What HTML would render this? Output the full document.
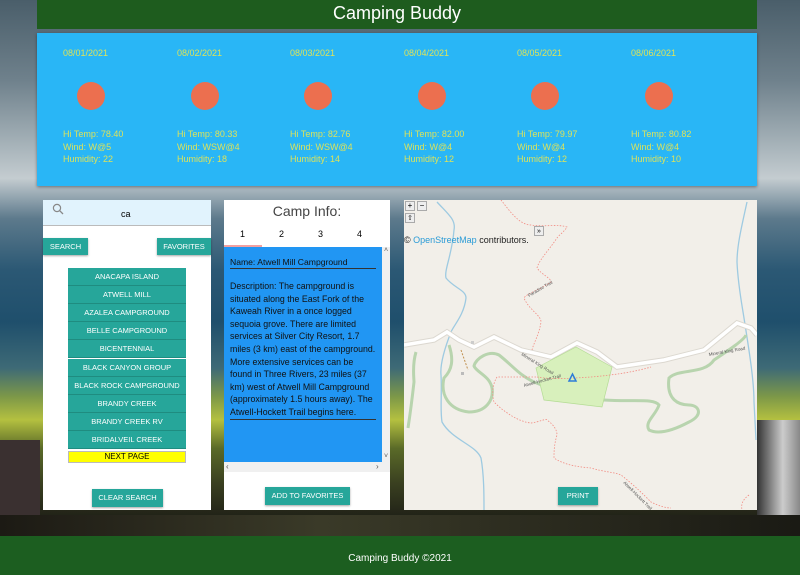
<!DOCTYPE html>
<html><head><meta charset="utf-8"><style>
*{margin:0;padding:0;box-sizing:border-box}
html,body{width:800px;height:575px;overflow:hidden}
body{position:relative;font-family:"Liberation Sans",sans-serif;
background:linear-gradient(180deg,#4a5e6a 0%,#6f818c 14%,#aab6bc 26%,#c4ccd0 31%,#5d7a8c 38%,#2b5874 47%,#1f4f6c 56%,#3e6a76 64%,#7d9848 69%,#b4c040 73%,#5a6a28 78%,#3a4020 84%,#1c1c16 91%,#2a281e 100%);}
.abs{position:absolute}
.hdr{left:37px;top:0;width:720px;height:29px;background:#1e5c1e;color:#fff;font-size:18px;text-align:center;line-height:26px}
.wx{left:37px;top:33px;width:720px;height:153px;background:#29b6f6;box-shadow:0 1px 3px rgba(0,0,0,.4)}
.col{position:absolute;top:0;color:#dde35a;font-size:9px}
.col .d{position:absolute;top:15px;left:0;white-space:nowrap}
.col .c{position:absolute;top:49px;left:14px;width:28px;height:28px;border-radius:50%;background:#ec6f4f}
.col .t{position:absolute;top:95px;left:0;white-space:nowrap;line-height:12.7px}
.panel{background:#fff;top:200px;height:310px}
.btn{position:absolute;background:#26a69a;color:#fff;font-size:7.5px;text-align:center;box-shadow:0 1px 2px rgba(0,0,0,.35)}
.li{position:absolute;left:25px;width:118px;height:18px;background:#26a69a;color:#fff;font-size:7.5px;text-align:center;line-height:18px;border-bottom:1px solid #1f8c80}
.foot{left:0;top:536px;width:800px;height:39px;background:#1c5e20;color:#fff;font-size:10px;text-align:center;line-height:46px}
</style></head><body>
<div class="abs" style="left:0;top:440px;width:40px;height:100px;background:#3a3030"></div>
<div class="abs" style="left:757px;top:420px;width:43px;height:110px;background:linear-gradient(90deg,#333,#ccc 60%,#888)"></div>
<div class="abs" style="left:0;top:515px;width:800px;height:22px;background:linear-gradient(90deg,#1c1a14,#3a3a28 40%,#1a1a14)"></div>
<div class="abs hdr">Camping Buddy</div>
<div class="abs wx">
 <div class="col" style="left:26px"><div class="d">08/01/2021</div><div class="c"></div><div class="t">Hi Temp: 78.40<br>Wind: W@5<br>Humidity: 22</div></div>
 <div class="col" style="left:140px"><div class="d">08/02/2021</div><div class="c"></div><div class="t">Hi Temp: 80.33<br>Wind: WSW@4<br>Humidity: 18</div></div>
 <div class="col" style="left:253px"><div class="d">08/03/2021</div><div class="c"></div><div class="t">Hi Temp: 82.76<br>Wind: WSW@4<br>Humidity: 14</div></div>
 <div class="col" style="left:367px"><div class="d">08/04/2021</div><div class="c"></div><div class="t">Hi Temp: 82.00<br>Wind: W@4<br>Humidity: 12</div></div>
 <div class="col" style="left:480px"><div class="d">08/05/2021</div><div class="c"></div><div class="t">Hi Temp: 79.97<br>Wind: W@4<br>Humidity: 12</div></div>
 <div class="col" style="left:594px"><div class="d">08/06/2021</div><div class="c"></div><div class="t">Hi Temp: 80.82<br>Wind: W@4<br>Humidity: 10</div></div>
</div>

<div class="abs panel" style="left:43px;width:168px">
 <div class="abs" style="left:0;top:0;width:168px;height:26px;background:#e1f3fd;border-bottom:1px solid #bbb"></div>
 <svg class="abs" style="left:9px;top:3px" width="12" height="12"><circle cx="5" cy="5" r="3.6" fill="none" stroke="#888" stroke-width="1.2"/><line x1="7.6" y1="7.6" x2="11" y2="11" stroke="#888" stroke-width="1.3"/></svg>
 <div class="abs" style="left:78px;top:9px;font-size:9px;color:#000">ca</div>
 <div class="btn" style="left:0;top:38px;width:45px;height:17px;line-height:17px">SEARCH</div>
 <div class="btn" style="left:114px;top:38px;width:54px;height:17px;line-height:17px">FAVORITES</div>
 <div class="li" style="top:68px">ANACAPA ISLAND</div>
 <div class="li" style="top:86px">ATWELL MILL</div>
 <div class="li" style="top:104px">AZALEA CAMPGROUND</div>
 <div class="li" style="top:122px">BELLE CAMPGROUND</div>
 <div class="li" style="top:140px">BICENTENNIAL</div>
 <div class="li" style="top:159px">BLACK CANYON GROUP</div>
 <div class="li" style="top:177px">BLACK ROCK CAMPGROUND</div>
 <div class="li" style="top:195px">BRANDY CREEK</div>
 <div class="li" style="top:213px">BRANDY CREEK RV</div>
 <div class="li" style="top:231px">BRIDALVEIL CREEK</div>
 <div class="abs" style="left:25px;top:251px;width:118px;height:12px;background:#ffff00;border:1px solid #bbb;font-size:8px;text-align:center;line-height:10px">NEXT PAGE</div>
 <div class="btn" style="left:49px;top:289px;width:71px;height:18px;line-height:18px">CLEAR SEARCH</div>
</div>

<div class="abs panel" style="left:224px;width:166px">
 <div class="abs" style="left:0;top:3px;width:166px;text-align:center;font-size:14px;color:#444">Camp Info:</div>
 <div class="abs" style="left:0;top:29px;width:166px;font-size:9px;color:#000">
  <span class="abs" style="left:16px">1</span><span class="abs" style="left:55px">2</span><span class="abs" style="left:94px">3</span><span class="abs" style="left:133px">4</span></div>
 <div class="abs" style="left:0;top:45px;width:38px;height:2px;background:#f3a0a0"></div>
 <div class="abs" style="left:0;top:47px;width:158px;height:215px;background:#2196f3"></div>
 <div class="abs" style="left:158px;top:47px;width:8px;height:215px;background:#f0f0f0;font-size:7px;color:#555;text-align:center">˄<div style="position:absolute;bottom:2px;width:8px">˅</div></div>
 <div class="abs" style="left:0;top:262px;width:166px;height:10px;background:#f0f0f0;font-size:8px;color:#555;line-height:10px"><span style="margin-left:2px">‹</span><span style="position:absolute;left:152px">›</span></div>
 <div class="abs" style="left:6px;top:57px;width:146px;font-size:8.6px;color:#111;border-bottom:1px solid #333;padding-bottom:1px">Name: Atwell Mill Campground</div>
 <div class="abs" style="left:6px;top:80px;width:146px;font-size:8.8px;color:#111;line-height:12.6px;border-bottom:1px solid #333">Description: The campground is situated along the East Fork of the Kaweah River in a once logged sequoia grove. There are limited services at Silver City Resort, 1.7 miles (3 km) east of the campground. More extensive services can be found in Three Rivers, 23 miles (37 km) west of Atwell Mill Campground (approximately 1.5 hours away). The Atwell-Hockett Trail begins here.</div>
 <div class="btn" style="left:41px;top:287px;width:85px;height:18px;line-height:18px">ADD TO FAVORITES</div>
</div>

<div class="abs panel" style="left:404px;width:353px;background:#f2efe9;overflow:hidden">
 <svg class="abs" style="left:0;top:0" width="353" height="310">
  <path d="M33,2 C45,15 52,20 50,30 C48,55 40,70 42,78 C50,88 62,90 62,98 C60,115 50,125 47,132 C40,150 36,165 37,175 C38,195 36,210 38,222 C48,240 72,245 77,258 C80,275 80,295 80,310" fill="none" stroke="#9ecae1" stroke-width="1.3"/>
  <path d="M343,2 C338,25 333,45 333,62 C334,85 338,105 340,118 C345,150 350,180 350,202 L352,240" fill="none" stroke="#9ecae1" stroke-width="1.3"/>
  <path d="M12,152 C8,165 10,178 10,182 C8,200 6,215 4,228" fill="none" stroke="#b8d4ae" stroke-width="3"/>
  <path d="M45,145 C50,160 48,170 40,178 C36,195 45,210 65,212 C82,212 90,200 88,188 C86,176 72,172 70,166 C72,158 85,150 95,155 C108,165 115,175 130,182 C150,190 170,198 200,200 C230,202 250,198 255,205 C252,215 240,222 245,230 C255,235 270,230 285,222 C300,215 295,205 285,205 C275,205 262,200 265,178 C275,168 300,175 310,160 C325,150 340,140 342,135" fill="none" stroke="#b8d4ae" stroke-width="3"/>
  <path d="M0,145 L30,140 L43,132 L55,140 L70,147 L90,137 L117,150 L147,157 L173,143 L193,152 L213,167 L260,160 L300,150 L333,123 L347,128 L353,135" fill="none" stroke="#dcd8d0" stroke-width="5.5"/>
  <path d="M0,145 L30,140 L43,132 L55,140 L70,147 L90,137 L117,150 L147,157 L173,143 L193,152 L213,167 L260,160 L300,150 L333,123 L347,128 L353,135" fill="none" stroke="#fff" stroke-width="3.5"/>
  <polygon points="132,168 172,147 208,167 198,207 140,200" fill="#d8f0bc" stroke="#b4dc94" stroke-width=".7"/>
  <path d="M97,0 C105,10 115,25 127,25 C140,27 155,24 163,27 C160,32 155,35 153,38 C145,50 135,60 133,68 C138,75 147,78 147,82 C135,90 122,94 120,98 C125,110 137,115 137,122 C135,135 130,142 128,150" fill="none" stroke="#f28b82" stroke-width=".8" stroke-dasharray="1.5,1.5"/>
  <path d="M132,177 L93,177 C88,185 88,195 90,202 C100,212 115,222 127,223 C135,222 143,218 143,220 C150,225 153,230 153,235 C150,245 150,252 150,258 C160,265 175,267 187,268 C200,272 210,272 217,275 C230,285 240,295 247,302 C255,306 262,308 267,308" fill="none" stroke="#f28b82" stroke-width=".8" stroke-dasharray="1.5,1.5"/>
  <path d="M133,177 C150,180 170,178 187,177 C210,175 230,172 247,167" fill="none" stroke="#f28b82" stroke-width=".8" stroke-dasharray="1.5,1.5"/>
  <path d="M345,295 C338,300 337,305 338,310" fill="none" stroke="#f28b82" stroke-width=".8" stroke-dasharray="1.5,1.5"/>
  <path d="M57,150 L64,170" stroke="#c09050" stroke-width="1" stroke-dasharray="2,1.5"/>
  <rect x="57" y="172" width="3" height="3" fill="#bbb"/><rect x="67" y="141" width="3" height="3" fill="#ccc"/>
  <path d="M165,181 L168.5,174 L172,181 Z" fill="none" stroke="#2d7cd8" stroke-width="1.5"/>
  <g font-family="Liberation Sans" font-size="4.5" fill="#555">
   <text transform="translate(117,155) rotate(32)">Mineral King Road</text>
   <text transform="translate(305,156) rotate(-10)">Mineral King Road</text>
   <text transform="translate(120,187) rotate(-15)">Atwell-Hockett Trail</text>
   <text transform="translate(125,97) rotate(-30)">Paradise Trail</text>
   <text transform="translate(219,283) rotate(45)">Atwell-Hockett Trail</text>
  </g>
 </svg>
 <div class="abs" style="left:1px;top:1px;width:10px;height:10px;border:1px solid #aaa;background:#eee;font-size:8px;text-align:center;line-height:8px">+</div>
 <div class="abs" style="left:13px;top:1px;width:10px;height:10px;border:1px solid #aaa;background:#eee;font-size:8px;text-align:center;line-height:8px">−</div>
 <div class="abs" style="left:1px;top:13px;width:10px;height:10px;border:1px solid #aaa;background:#eee;font-size:7px;text-align:center;line-height:9px">⇧</div>
 <div class="abs" style="left:130px;top:26px;width:10px;height:10px;border:1px solid #aaa;background:#eee;font-size:7px;text-align:center;line-height:9px">»</div>
 <div class="abs" style="left:0;top:35px;font-size:9px;color:#222">© <span style="color:#2a9bd6">OpenStreetMap</span> contributors.</div>
 <div class="btn" style="left:154px;top:287px;width:40px;height:18px;line-height:18px">PRINT</div>
</div>
<div class="abs foot">Camping Buddy ©2021</div>
</body></html>
